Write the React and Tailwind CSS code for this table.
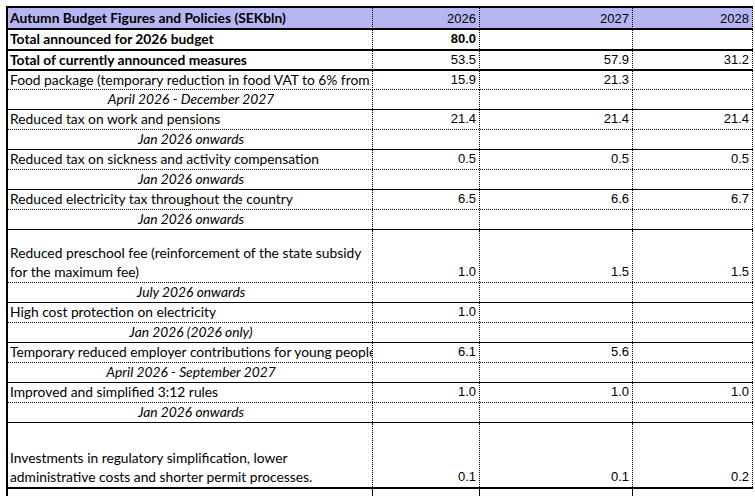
import React from "react";

const rows = [
  { label: "Total announced for 2026 budget", bold: true, boldNum: true, vals: ["80.0", "", ""], h: "h-[21px]", border: "border-b-2 border-solid" },
  { label: "Total of currently announced measures", bold: true, vals: ["53.5", "57.9", "31.2"], h: "h-[20px]", border: "border-b-2 border-solid" },
  { label: "Food package (temporary reduction in food VAT to 6% from", vals: ["15.9", "21.3", ""], h: "h-[19px]", border: "border-b border-dotted" },
  { label: "April 2026 - December 2027", italic: true, vals: ["", "", ""], h: "h-[20px]", border: "border-b border-solid" },
  { label: "Reduced tax on work and pensions", vals: ["21.4", "21.4", "21.4"], h: "h-[20px]", border: "border-b border-dotted" },
  { label: "Jan 2026 onwards", italic: true, vals: ["", "", ""], h: "h-[20px]", border: "border-b border-solid" },
  { label: "Reduced tax on sickness and activity compensation", vals: ["0.5", "0.5", "0.5"], h: "h-[20px]", border: "border-b border-dotted" },
  { label: "Jan 2026 onwards", italic: true, vals: ["", "", ""], h: "h-[20px]", border: "border-b border-solid" },
  { label: "Reduced electricity tax throughout the country", vals: ["6.5", "6.6", "6.7"], h: "h-[20px]", border: "border-b border-dotted" },
  { label: "Jan 2026 onwards", italic: true, vals: ["", "", ""], h: "h-[20px]", border: "border-b border-solid" },
  { label: ["Reduced preschool fee (reinforcement of the state subsidy", "for the maximum fee)"], vals: ["1.0", "1.5", "1.5"], h: "h-[53px]", border: "border-b border-dotted" },
  { label: "July 2026 onwards", italic: true, vals: ["", "", ""], h: "h-[20px]", border: "border-b border-solid" },
  { label: "High cost protection on electricity", vals: ["1.0", "", ""], h: "h-[20px]", border: "border-b border-dotted" },
  { label: "Jan 2026 (2026 only)", italic: true, vals: ["", "", ""], h: "h-[20px]", border: "border-b border-solid" },
  { label: "Temporary reduced employer contributions for young people", vals: ["6.1", "5.6", ""], h: "h-[20px]", border: "border-b border-dotted" },
  { label: "April 2026 - September 2027", italic: true, vals: ["", "", ""], h: "h-[20px]", border: "border-b border-solid" },
  { label: "Improved and simplified 3:12 rules", vals: ["1.0", "1.0", "1.0"], h: "h-[20px]", border: "border-b border-dotted" },
  { label: "Jan 2026 onwards", italic: true, vals: ["", "", ""], h: "h-[20px]", border: "border-b border-solid" },
  { label: ["Investments in regulatory simplification, lower", "administrative costs and shorter permit processes."], vals: ["0.1", "0.1", "0.2"], h: "h-[66px]", border: "border-b-2 border-solid" },
];

const cols = "grid grid-cols-[365px_107px_153px_120px]";
const labelFont = { fontFamily: "Lato, 'Open Sans', sans-serif" };
const numFont = { fontFamily: "'Liberation Sans', Arial, sans-serif" };

const Row = ({ row }) => {
  const lines = Array.isArray(row.label) ? row.label : [row.label];
  return (
    <div className={`${cols} ${row.h} ${row.border} border-black box-border`}>
      <div
        style={labelFont}
        className={`flex flex-col justify-end overflow-hidden whitespace-nowrap border-r border-dotted border-black pl-[2px] pb-[1px] text-[13.8px] leading-[19px] text-black ${
          row.bold ? "font-bold" : ""
        } ${row.italic ? "italic items-center" : ""}`}
      >
        {lines.map((l, i) => (
          <span key={i}>{l}</span>
        ))}
      </div>
      {row.vals.map((v, i) => (
        <div
          key={i}
          style={numFont}
          className={`flex items-end justify-end border-r border-dotted border-black pr-[3px] pb-[1px] text-[13px] leading-[18px] text-black ${
            row.boldNum ? "font-bold" : ""
          }`}
        >
          {v}
        </div>
      ))}
    </div>
  );
};

export default function App() {
  return (
    <div className="h-[496px] w-[755px] overflow-hidden bg-white pl-[6px] pt-[6px]">
      <div className="w-[747px] border-l-2 border-t-2 border-black">
        <div className={`${cols} h-[22px] border-b-2 border-black bg-[#b6b6f2]`}>
          <div
            style={labelFont}
            className="flex items-center whitespace-nowrap border-r border-dotted border-black pl-[2px] text-[13.8px] font-bold text-black"
          >
            Autumn Budget Figures and Policies (SEKbln)
          </div>
          {["2026", "2027", "2028"].map((y) => (
            <div
              key={y}
              style={numFont}
              className="flex items-center justify-end border-r border-dotted border-black pr-[3px] text-[13px] text-black"
            >
              {y}
            </div>
          ))}
        </div>
        {rows.map((r, i) => (
          <Row key={i} row={r} />
        ))}
        <div className={`${cols} h-[10px]`}>
          <div className="border-r border-black" />
          <div className="border-r border-black" />
          <div className="border-r border-black" />
          <div />
        </div>
      </div>
    </div>
  );
}
